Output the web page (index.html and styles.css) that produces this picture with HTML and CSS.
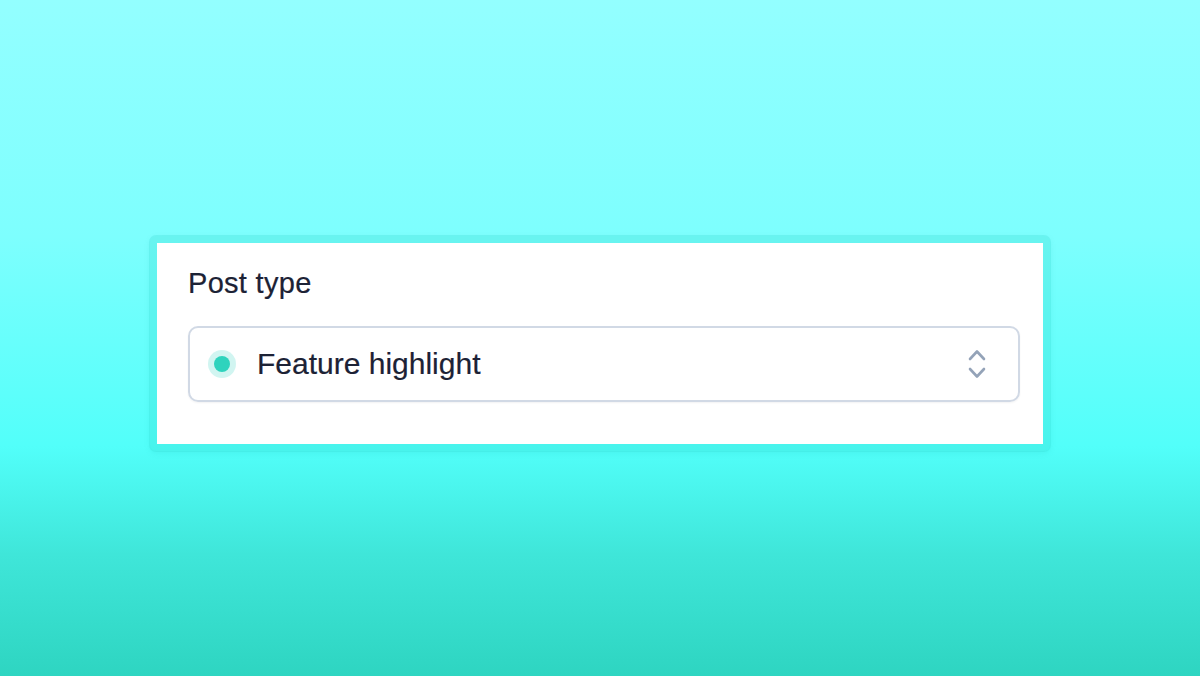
FILE: index.html
```html
<!DOCTYPE html>
<html lang="en">
<head>
<meta charset="utf-8">
<title>Post type</title>
<link rel="stylesheet" href="styles.css">
</head>
<body>
<main class="stage">
  <div class="frame">
    <section class="card">
      <label class="label" for="post-type">Post type</label>
      <div class="select" id="post-type" role="button">
        <span class="dot"></span>
        <span class="value">Feature highlight</span>
        <svg class="chevrons" width="18" height="30" viewBox="0 0 18 30" aria-hidden="true">
          <path d="M2 10 L9 2.5 L16 10" />
          <path d="M2 20 L9 27.5 L16 20" />
        </svg>
      </div>
    </section>
  </div>
</main>
</body>
</html>
```
FILE: styles.css
```css
* { box-sizing: border-box; }
html, body { margin: 0; padding: 0; }
body {
  width: 1200px;
  height: 676px;
  overflow: hidden;
  font-family: "Liberation Sans", Arial, Helvetica, sans-serif;
  background: linear-gradient(180deg, #93ffff 0%, #7dfffe 35%, #52fffa 66%, #3fe6d9 82%, #2ed5c1 100%);
}
.stage {
  height: 676px;
  display: flex;
  justify-content: center;
  padding-top: 236px;
}
.frame {
  width: 900px;
  height: 215px;
  padding: 7px;
  border-radius: 6px;
  background: rgba(45, 212, 200, 0.26);
  box-shadow: 0 0 0 1px rgba(45, 212, 200, 0.2), 0 2px 6px rgba(20, 160, 160, 0.12);
}
.card {
  background: #ffffff;
  height: 201px;
  padding: 24px 23px 0 31px;
  display: flex;
  flex-direction: column;
}
.label {
  display: block;
  font-size: 29px;
  line-height: 32px;
  letter-spacing: 0.3px;
  color: #1c2235;
  -webkit-text-stroke: 0.2px #1c2235;
  margin-bottom: 27px;
}
.select {
  height: 76px;
  border: 2px solid #d1d9e5;
  border-radius: 10px;
  display: flex;
  align-items: center;
  padding: 0 32px 0 24px;
  box-shadow: 0 1px 2px rgba(30, 41, 59, 0.06);
}
.dot {
  width: 16px;
  height: 16px;
  border-radius: 50%;
  background: #2fd3bd;
  box-shadow: 0 0 0 6px rgba(47, 211, 189, 0.22);
  flex: none;
}
.value {
  margin-left: 27px;
  font-size: 30px;
  line-height: 34px;
  color: #1c2235;
  -webkit-text-stroke: 0.2px #1c2235;
  flex: 1;
}
.chevrons {
  flex: none;
  fill: none;
  stroke: #94a3b8;
  stroke-width: 2.6;
  stroke-linecap: round;
  stroke-linejoin: round;
}
```
